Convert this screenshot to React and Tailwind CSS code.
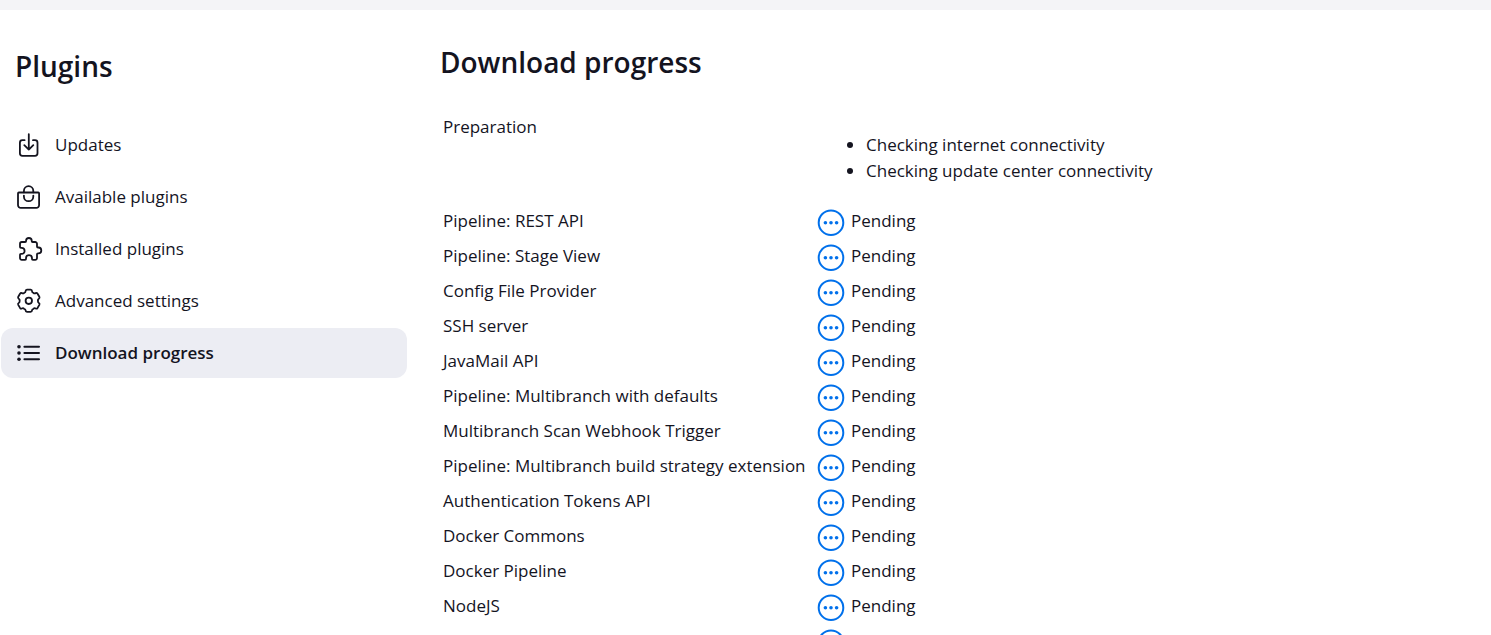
const plugins = [
  "Pipeline: REST API",
  "Pipeline: Stage View",
  "Config File Provider",
  "SSH server",
  "JavaMail API",
  "Pipeline: Multibranch with defaults",
  "Multibranch Scan Webhook Trigger",
  "Pipeline: Multibranch build strategy extension",
  "Authentication Tokens API",
  "Docker Commons",
  "Docker Pipeline",
  "NodeJS",
  "",
];

function Icon({ children }) {
  return (
    <svg
      viewBox="0 0 28 28"
      className="size-7 shrink-0"
      fill="none"
      stroke="currentColor"
      strokeWidth="1.8"
      strokeLinecap="round"
      strokeLinejoin="round"
      aria-hidden="true"
    >
      {children}
    </svg>
  );
}

function DownloadIcon() {
  return (
    <Icon>
      <path d="M9.6 9.2H7.4A2.5 2.5 0 0 0 4.9 11.7V22.3A2.5 2.5 0 0 0 7.4 24.8H20A2.5 2.5 0 0 0 22.5 22.3V11.7A2.5 2.5 0 0 0 20 9.2H18" />
      <path d="M13.8 3.2V18.6M9.3 14.2L13.8 18.6L18.3 14.2" />
    </Icon>
  );
}

function BagIcon() {
  return (
    <Icon>
      <path d="M3.9 9.5H23.2A.9.9 0 0 1 24.1 10.4V22.1A2.8 2.8 0 0 1 21.3 24.9H5.8A2.8 2.8 0 0 1 3 22.1V10.4A.9.9 0 0 1 3.9 9.5Z" />
      <path d="M8.9 9.3V8A4.7 4.9 0 0 1 18.3 8V9.3M8.9 12.6V13.4A4.7 4.8 0 0 0 18.3 13.4V12.6" />
    </Icon>
  );
}

function PuzzleIcon() {
  return (
    <Icon>
      <path d="M6.8 7H10.1A1 1 0 0 0 11.1 6V5.6A2.8 2.6 0 0 1 16.7 5.6V6A1 1 0 0 0 17.7 7H20.2A1.8 1.8 0 0 1 22 8.8V11.5A1 1 0 0 0 23 12.5H23.5A2.8 2.9 0 0 1 23.5 18.3H23A1 1 0 0 0 22 19.3V23A1.8 1.8 0 0 1 20.2 24.8H17.9A.9.9 0 0 1 17 23.9V23.2A3 3 0 0 0 11 23.2V23.9A.9.9 0 0 1 10.1 24.8H6.8A1.8 1.8 0 0 1 5 23V19.8A.9.9 0 0 1 5.9 18.9H6.6A3 3 0 0 0 6.6 12.9H5.9A.9.9 0 0 1 5 12V8.8A1.8 1.8 0 0 1 6.8 7Z" />
    </Icon>
  );
}

const polar = (degrees, radius) => {
  const angle = (degrees * Math.PI) / 180;
  return `${(13.8 + radius * Math.cos(angle)).toFixed(2)} ${(13.8 + radius * Math.sin(angle)).toFixed(2)}`;
};

// Six lobes joined by shallow valleys.
const gearOutline =
  [-90, -30, 30, 90, 150, 210]
    .map(
      (a, i) =>
        `${i ? "L" : "M"}${polar(a - 9, 11.3)}L${polar(a + 9, 11.3)}` +
        `Q${polar(a + 16, 11.5)} ${polar(a + 18, 10.3)}` +
        `Q${polar(a + 21, 8.9)} ${polar(a + 30, 9.2)}` +
        `Q${polar(a + 39, 8.9)} ${polar(a + 42, 10.3)}` +
        `Q${polar(a + 44, 11.5)} ${polar(a + 51, 11.3)}`,
    )
    .join("") + "Z";

function GearIcon() {
  return (
    <Icon>
      <path d={gearOutline} />
      <circle cx="13.8" cy="13.8" r="3.2" />
    </Icon>
  );
}

function ListIcon() {
  return (
    <Icon>
      <path strokeWidth="2" d="M9.4 7.8H24M9.4 14H24M9.4 20.2H24" />
      <g fill="currentColor" stroke="none">
        <circle cx="4" cy="7.8" r="1.8" />
        <circle cx="4" cy="14" r="1.8" />
        <circle cx="4" cy="20.2" r="1.8" />
      </g>
    </Icon>
  );
}

function PendingIcon() {
  return (
    <svg viewBox="0 0 28 28" className="mt-[3px] size-7 shrink-0" aria-hidden="true">
      <circle cx="14" cy="13.7" r="12.3" fill="none" stroke="#0070eb" strokeWidth="2" />
      <circle cx="8.4" cy="13.7" r="1.8" fill="#0070eb" />
      <circle cx="14" cy="13.7" r="1.8" fill="#0070eb" />
      <circle cx="19.6" cy="13.7" r="1.8" fill="#0070eb" />
    </svg>
  );
}

const links = [
  { label: "Updates", icon: DownloadIcon },
  { label: "Available plugins", icon: BagIcon },
  { label: "Installed plugins", icon: PuzzleIcon },
  { label: "Advanced settings", icon: GearIcon },
  { label: "Download progress", icon: ListIcon, active: true },
];

function SideLink({ label, icon: LinkIcon, active }) {
  return (
    <a
      href="#"
      aria-current={active ? "page" : undefined}
      className={
        active
          ? "flex h-[50px] items-center gap-3 rounded-xl bg-[#ecedf3] pl-3.5 font-semibold"
          : "flex h-[50px] items-center gap-3 rounded-xl pl-3.5"
      }
    >
      <LinkIcon />
      {label}
    </a>
  );
}

export default function App() {
  return (
    <div className="h-screen overflow-hidden bg-white font-['Segoe_UI','Open_Sans',sans-serif] text-[17px] leading-[26px] text-[#14141f]">
      <div className="h-2.5 bg-[#f4f4f7]" />
      <div className="flex">
        <aside className="w-[407px] shrink-0 pt-9 pl-px">
          <h1 className="pl-3.5 text-[28px] leading-10 font-semibold">Plugins</h1>
          <nav className="mt-[34px] flex flex-col gap-0.5" aria-label="Plugins">
            {links.map((link) => (
              <SideLink key={link.label} {...link} />
            ))}
          </nav>
        </aside>
        <main className="min-w-0 flex-1 pt-8 pl-[33px]">
          <h2 className="text-[28px] leading-10 font-semibold">Download progress</h2>
          <table className="mt-8 ml-[3px] text-left">
            <tbody>
              <tr className="h-[92px] align-top">
                <th scope="row" className="w-[374px] font-normal">
                  Preparation
                </th>
                <td className="pt-[18px]">
                  <ul className="list-disc pl-[49px]">
                    <li>Checking internet connectivity</li>
                    <li>Checking update center connectivity</li>
                  </ul>
                </td>
              </tr>
              {plugins.map((name) => (
                <tr key={name} className="h-[35px] align-top">
                  <th scope="row" className="pt-0.5 font-normal whitespace-nowrap">
                    {name}
                  </th>
                  <td>
                    <div className="flex items-start gap-1.5">
                      <PendingIcon />
                      <span className="pt-0.5">Pending</span>
                    </div>
                  </td>
                </tr>
              ))}
            </tbody>
          </table>
        </main>
      </div>
    </div>
  );
}
